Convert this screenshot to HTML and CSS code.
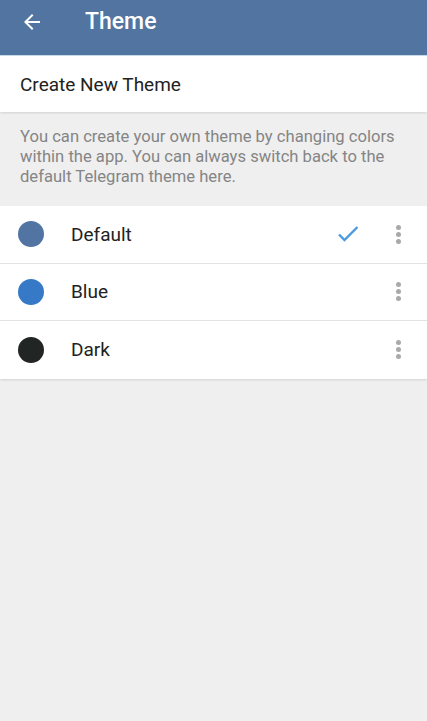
FILE: index.html
```html
<!DOCTYPE html>
<html>
<head>
<meta charset="utf-8">
<link rel="stylesheet" href="styles.css">
</head>
<body>
<header class="bar">
  <svg class="back" width="24" height="24" viewBox="0 0 24 24"><path d="M20 11H7.83l5.59-5.59L12 4l-8 8 8 8 1.41-1.41L7.83 13H20v-2z" fill="#fff"/></svg>
  <h1 class="title">Theme</h1>
</header>
<div class="create">Create New Theme</div>
<div class="info">You can create your own theme by changing colors within the app. You can always switch back to the default Telegram theme here.</div>
<ul class="list">
  <li class="row">
    <span class="dot dot-default"></span>
    <span class="name">Default</span>
    <svg class="check" width="24" height="24" viewBox="0 0 24 24"><path d="M3 12.5l5.5 5.5L21.5 5" fill="none" stroke="#4a9be0" stroke-width="2.4"/></svg>
    <span class="more"><i></i><i></i><i></i></span>
  </li>
  <li class="row">
    <span class="dot dot-blue"></span>
    <span class="name">Blue</span>
    <span class="more"><i></i><i></i><i></i></span>
  </li>
  <li class="row">
    <span class="dot dot-dark"></span>
    <span class="name">Dark</span>
    <span class="more"><i></i><i></i><i></i></span>
  </li>
</ul>
</body>
</html>
```
FILE: styles.css
```css
* { box-sizing: border-box; }
html, body { margin: 0; padding: 0; }
body {
  background: #efefef;
  font-family: Roboto, "Noto Sans", sans-serif;
  width: 427px;
  height: 721px;
  overflow: hidden;
}
.bar {
  height: 56px;
  background: #5274a0;
  display: flex;
  align-items: center;
  padding-left: 20px;
  border-bottom: 1px solid #c9dde9;
}
.back { width: 24px; height: 24px; margin-top: -12px; }
.title {
  margin: 0 0 0 41px;
  color: #fff;
  font-size: 23px;
  font-weight: 500;
  margin-top: -13px;
}
.create {
  background: #fff;
  height: 56px;
  display: flex;
  align-items: center;
  padding-left: 20px;
  font-size: 19px;
  color: #222;
  box-shadow: 0 1px 2px rgba(0,0,0,0.12);
  position: relative;
}
.info {
  padding: 15px 20px 19px 20px;
  font-size: 16.6px;
  line-height: 20px;
  color: #858585;
  height: 94px;
}
.list {
  list-style: none;
  margin: 0;
  padding: 0;
  background: #fff;
  box-shadow: 0 1px 2px rgba(0,0,0,0.12);
}
.row {
  display: flex;
  align-items: center;
  height: 57.5px;
  padding-left: 18px;
  border-bottom: 1px solid #e3e3e3;
}
.row:last-child { border-bottom: none; }
.dot {
  width: 26px;
  height: 26px;
  border-radius: 50%;
  flex: none;
}
.dot-default { background: #5274a3; }
.dot-blue { background: #3679c6; }
.dot-dark { background: #212624; }
.name {
  margin-left: 27px;
  font-size: 19px;
  color: #222;
  flex: 1;
}
.check { margin-right: 26px; }
.more {
  width: 24px;
  margin-right: 17px;
  display: flex;
  flex-direction: column;
  align-items: center;
  gap: 2px;
}
.more i {
  width: 5px;
  height: 5px;
  border-radius: 50%;
  background: #a9a9a9;
  display: block;
}
```
